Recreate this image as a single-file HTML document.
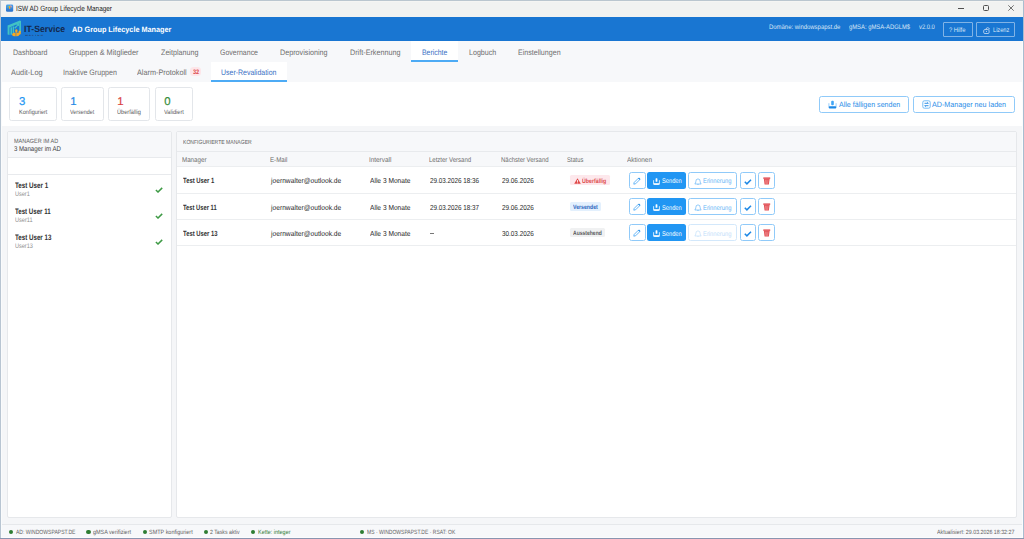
<!DOCTYPE html>
<html><head><meta charset="utf-8"><title>ISW AD Group Lifecycle Manager</title>
<style>
html,body{margin:0;padding:0;}
body{width:1024px;height:539px;overflow:hidden;position:relative;font-family:"Liberation Sans",sans-serif;text-rendering:geometricPrecision;}
.t{position:absolute;white-space:nowrap;line-height:1;transform-origin:0 0;}
.r{position:absolute;}
</style></head><body>
<div class="r" style="left:0px;top:0px;width:1024px;height:539px;background:#F5F6F8;"></div>
<div class="r" style="left:0px;top:0px;width:1024px;height:17px;background:#F1F2F1;"></div>
<div class="r" style="left:0px;top:1px;width:1024px;height:1px;background:#F5F5F3;"></div>
<svg class="r" style="left:5px;top:3px" width="10" height="10" viewBox="5 3 10 10"><defs><linearGradient id="ig" x1="0" y1="0" x2="0" y2="1"><stop offset="0" stop-color="#4BA3F0"/><stop offset="1" stop-color="#2A6FC9"/></linearGradient></defs><rect x="6" y="4.5" width="7.2" height="7.3" rx="1.3" fill="url(#ig)"/><path d="M7.2 7.2 Q8.2 5.6 9.6 5.4 L9.4 6.6 Q8.4 7 7.8 8 Z" fill="#7CC68A"/><path d="M10.2 5.3 Q11.6 5.6 12 7 L11.2 7.4 Q10.8 6.4 10.2 6.2 Z" fill="#F2A0A0"/><path d="M9 6.2 Q9.8 5.8 10.4 6.4 L10.4 8.6 Q9.7 9.2 8.9 8.6 Z" fill="#F5A623"/></svg>
<div class="t" id="t1" style="left:16.40px;top:5.0000px;font-size:7.61px;color:#222222;transform:scaleX(0.8438);">ISW AD Group Lifecycle Manager</div>
<div class="r" style="left:958px;top:8px;width:6px;height:1px;background:#505050;"></div>
<div class="r" style="left:983px;top:5px;width:6px;height:6px;box-sizing:border-box;border:1px solid #505050;border-radius:1.5px;"></div>
<svg class="r" style="left:1008px;top:5px" width="6" height="6" viewBox="0 0 6 6"><path d="M0.3 0.3 L5.7 5.7 M5.7 0.3 L0.3 5.7" stroke="#505050" stroke-width="0.8"/></svg>
<div class="r" style="left:1px;top:17px;width:1022px;height:24px;background:#1976D2;"></div>
<svg class="r" style="left:6px;top:19px" width="18" height="19" viewBox="6 19 18 19"><g fill="#42C2C4"><path d="M7.6 25.4 L19.9 20.4 L21.0 20.9 L21.0 32.0 L19.3 32.6 L19.3 23.2 L9.5 27.4 L9.5 34.9 L7.6 34.4 Z"/><rect x="10.5" y="27.3" width="1.5" height="7.4"/><rect x="12.7" y="26.5" width="1.4" height="7.0"/><path d="M14.3 27.6 L17.4 24.7 L16.2 24.5 L16.8 23.0 L19.0 23.3 L19.1 26.0 L17.9 25.8 L18.0 25.4 L15.4 28.8 Z"/></g><g fill="#F7A823"><rect x="15.3" y="29.3" width="2.1" height="3.4" rx="1"/><rect x="18.6" y="30.8" width="2.2" height="3.6" rx="1"/><path d="M12.1 34.6 Q12.1 32.8 14.2 32.7 L18.6 32.7 Q19.8 32.8 19.6 34.2 Q19.2 36.2 17.0 36.3 L14.0 36.3 Q12.1 36.3 12.1 34.6 Z"/></g><path d="M15.9 32.8 L15.9 36.4" stroke="#1976D2" stroke-width="0.55"/></svg>
<div class="t" id="t2" style="left:23.90px;top:25.0000px;font-size:9.15px;color:#14264A;font-weight:700;transform:scaleX(0.9530);">IT-Service</div>
<div class="t" id="t3" style="left:24.80px;top:35.0000px;font-size:2.0px;color:#2A3F66;font-weight:700;transform:scaleX(1.6134);">W A L T E R</div>
<div class="t" id="t4" style="left:72.00px;top:26.0000px;font-size:7.75px;color:#FFFFFF;font-weight:700;transform:scaleX(0.9382);">AD Group Lifecycle Manager</div>
<div class="t" id="t5" style="left:768.50px;top:25.0000px;font-size:6.63px;color:#D9E6F6;transform:scaleX(0.8976);">Domäne: windowspapst.de</div>
<div class="t" id="t6" style="left:849.00px;top:25.0000px;font-size:6.63px;color:#D9E6F6;transform:scaleX(0.8827);">gMSA: gMSA-ADGLM$</div>
<div class="t" id="t7" style="left:918.90px;top:25.0000px;font-size:6.63px;color:#D9E6F6;transform:scaleX(0.8747);">v2.0.0</div>
<div class="r" style="left:943px;top:22px;width:30px;height:15px;box-sizing:border-box;border:1px solid rgba(255,255,255,0.45);border-radius:1px;"></div>
<div class="t" id="t8" style="left:949.40px;top:28.0000px;font-size:6.63px;color:#DCE8F7;transform:scaleX(0.8732);">? Hilfe</div>
<div class="r" style="left:976px;top:22px;width:39px;height:15px;box-sizing:border-box;border:1px solid rgba(255,255,255,0.45);border-radius:1px;"></div>
<svg class="r" style="left:982.5px;top:26.5px" width="8" height="7" viewBox="0 0 8 7"><rect x="0.7" y="2.6" width="5.4" height="3.9" rx="1.1" fill="none" stroke="#DCE8F7" stroke-width="0.75"/><path d="M3.0 2.6 V1.6 Q4.6 -0.2 6.3 1.4 V2.4" fill="none" stroke="#DCE8F7" stroke-width="0.75"/><circle cx="3.4" cy="4.5" r="0.55" fill="#DCE8F7"/></svg>
<div class="t" id="t9" style="left:992.50px;top:28.0000px;font-size:6.63px;color:#DCE8F7;transform:scaleX(0.8483);">Lizenz</div>
<div class="r" style="left:1px;top:41px;width:1022px;height:41px;background:#F7F8FA;"></div>
<div class="r" style="left:411px;top:41px;width:47px;height:21px;background:#FFFFFF;"></div>
<div class="r" style="left:411px;top:60px;width:47px;height:2px;background:#4DABF5;"></div>
<div class="t" id="t10" style="left:12.50px;top:49.0000px;font-size:7.89px;color:#6E6E6E;transform:scaleX(0.8954);">Dashboard</div>
<div class="t" id="t11" style="left:68.75px;top:49.0000px;font-size:7.89px;color:#6E6E6E;transform:scaleX(0.9339);">Gruppen &amp; Mitglieder</div>
<div class="t" id="t12" style="left:160.50px;top:49.0000px;font-size:7.89px;color:#6E6E6E;transform:scaleX(0.9112);">Zeitplanung</div>
<div class="t" id="t13" style="left:220.00px;top:49.0000px;font-size:7.89px;color:#6E6E6E;transform:scaleX(0.8857);">Governance</div>
<div class="t" id="t14" style="left:279.80px;top:49.0000px;font-size:7.89px;color:#6E6E6E;transform:scaleX(0.9137);">Deprovisioning</div>
<div class="t" id="t15" style="left:349.50px;top:49.0000px;font-size:7.89px;color:#6E6E6E;transform:scaleX(0.9174);">Drift-Erkennung</div>
<div class="t" id="t16" style="left:422.20px;top:49.0000px;font-size:7.89px;color:#3A70C4;transform:scaleX(0.8757);">Berichte</div>
<div class="t" id="t17" style="left:469.30px;top:49.0000px;font-size:7.89px;color:#6E6E6E;transform:scaleX(0.9034);">Logbuch</div>
<div class="t" id="t18" style="left:518.30px;top:49.0000px;font-size:7.89px;color:#6E6E6E;transform:scaleX(0.9007);">Einstellungen</div>
<div class="r" style="left:211px;top:62px;width:76px;height:20px;background:#FFFFFF;"></div>
<div class="r" style="left:211px;top:80px;width:76px;height:2px;background:#4DABF5;"></div>
<div class="t" id="t19" style="left:11.40px;top:69.0000px;font-size:7.89px;color:#6E6E6E;transform:scaleX(0.9372);">Audit-Log</div>
<div class="t" id="t20" style="left:63.30px;top:69.0000px;font-size:7.89px;color:#6E6E6E;transform:scaleX(0.8986);">Inaktive Gruppen</div>
<div class="t" id="t21" style="left:136.70px;top:69.0000px;font-size:7.89px;color:#6E6E6E;transform:scaleX(0.9233);">Alarm-Protokoll</div>
<div class="t" id="t22" style="left:221.00px;top:69.0000px;font-size:7.89px;color:#3A70C4;transform:scaleX(0.8851);">User-Revalidation</div>
<div class="r" style="left:190px;top:67px;width:11px;height:9px;background:#FDE6E9;border-radius:3.5px;"></div>
<div class="t" id="t23" style="left:192.50px;top:70.0000px;font-size:6.49px;color:#DC4A4A;font-weight:700;transform:scaleX(0.8589);">32</div>
<div class="r" style="left:1px;top:82px;width:1022px;height:44px;background:#FFFFFF;"></div>
<div class="r" style="left:9px;top:87px;width:48px;height:34px;background:#FFFFFF;box-sizing:border-box;border:1px solid #E3E6EA;border-radius:2.5px;"></div>
<div class="t" id="t24" style="left:19.00px;top:97.0000px;font-size:11.38px;color:#2196F3;-webkit-text-stroke:0.2px #2196F3;">3</div>
<div class="t" id="t25" style="left:19.00px;top:110.0000px;font-size:6.22px;color:#5C5C5C;transform:scaleX(0.8927);">Konfiguriert</div>
<div class="r" style="left:61px;top:87px;width:43px;height:34px;background:#FFFFFF;box-sizing:border-box;border:1px solid #E3E6EA;border-radius:2.5px;"></div>
<div class="t" id="t26" style="left:70.30px;top:97.0000px;font-size:11.38px;color:#1E88E5;-webkit-text-stroke:0.2px #1E88E5;">1</div>
<div class="t" id="t27" style="left:70.30px;top:110.0000px;font-size:6.22px;color:#5C5C5C;transform:scaleX(0.8674);">Versendet</div>
<div class="r" style="left:108px;top:87px;width:42px;height:34px;background:#FFFFFF;box-sizing:border-box;border:1px solid #E3E6EA;border-radius:2.5px;"></div>
<div class="t" id="t28" style="left:117.20px;top:97.0000px;font-size:11.38px;color:#D9433F;-webkit-text-stroke:0.2px #D9433F;">1</div>
<div class="t" id="t29" style="left:117.20px;top:110.0000px;font-size:6.22px;color:#5C5C5C;transform:scaleX(0.9056);">Überfällig</div>
<div class="r" style="left:155px;top:87px;width:38px;height:34px;background:#FFFFFF;box-sizing:border-box;border:1px solid #E3E6EA;border-radius:2.5px;"></div>
<div class="t" id="t30" style="left:164.20px;top:97.0000px;font-size:11.38px;color:#388E3C;-webkit-text-stroke:0.2px #388E3C;">0</div>
<div class="t" id="t31" style="left:164.20px;top:110.0000px;font-size:6.22px;color:#5C5C5C;transform:scaleX(0.8994);">Validiert</div>
<div class="r" style="left:819px;top:96px;width:90px;height:17px;background:#FFFFFF;box-sizing:border-box;border:1px solid #90CAF9;border-radius:2.5px;"></div>
<svg class="r" style="left:828px;top:100px" width="9" height="9" viewBox="0 0 9 9"><path d="M0.9 3.2 V7.4 Q0.9 8.3 1.8 8.3 H7.2 Q8.1 8.3 8.1 7.4 V3.2" fill="none" stroke="#90CAF9" stroke-width="0.9"/><rect x="0.9" y="6.2" width="7.2" height="2.1" rx="0.6" fill="#1E88E5"/><rect x="3.2" y="0.8" width="2.6" height="4.4" rx="0.9" fill="#42A5F5"/></svg>
<div class="t" id="t32" style="left:839.20px;top:101.0000px;font-size:7.61px;color:#2C8EE8;transform:scaleX(0.9288);">Alle fälligen senden</div>
<div class="r" style="left:913px;top:96px;width:102px;height:17px;background:#FFFFFF;box-sizing:border-box;border:1px solid #90CAF9;border-radius:2.5px;"></div>
<svg class="r" style="left:921.5px;top:100px" width="9" height="9" viewBox="0 0 9 9"><rect x="0.8" y="0.8" width="7.4" height="7.4" rx="1.5" fill="none" stroke="#64B5F6" stroke-width="0.9"/><path d="M2.5 3.3 H6.3 M5.3 2.4 L6.3 3.3" fill="none" stroke="#1E88E5" stroke-width="0.9"/><path d="M6.5 5.7 H2.7 M3.7 6.6 L2.7 5.7" fill="none" stroke="#1E88E5" stroke-width="0.9"/></svg>
<div class="t" id="t33" style="left:932.30px;top:101.0000px;font-size:7.61px;color:#2C8EE8;transform:scaleX(0.9417);">AD-Manager neu laden</div>
<div class="r" style="left:7px;top:131px;width:165px;height:387px;background:#FFFFFF;box-sizing:border-box;border:1px solid #E6E8EB;border-radius:2px;"></div>
<div class="r" style="left:8px;top:132px;width:163px;height:25px;background:#F7F8FA;"></div>
<div class="r" style="left:8px;top:157px;width:163px;height:1px;background:#E8EAED;"></div>
<div class="r" style="left:8px;top:174px;width:163px;height:1px;background:#E8EAED;"></div>
<div class="t" id="t34" style="left:14.10px;top:139.0000px;font-size:6.08px;color:#5E5E5E;transform:scaleX(0.9023);">MANAGER IM AD</div>
<div class="t" id="t35" style="left:14.10px;top:146.0000px;font-size:7.05px;color:#3A3A3A;transform:scaleX(0.8613);">3 Manager im AD</div>
<div class="t" id="t36" style="left:15.00px;top:182.0000px;font-size:7.89px;color:#333333;font-weight:700;transform:scaleX(0.7928);">Test User 1</div>
<div class="t" id="t37" style="left:15.20px;top:192.0000px;font-size:6.63px;color:#8C8C8C;transform:scaleX(0.8367);">User1</div>
<svg class="r" style="left:154.5px;top:187.2px" width="8" height="6" viewBox="0 0 8 6"><path d="M0.9 3.0 L3.0 5.0 L7.2 0.9" fill="none" stroke="#3E9A45" stroke-width="1.5"/></svg>
<div class="t" id="t38" style="left:15.00px;top:208.0000px;font-size:7.89px;color:#333333;font-weight:700;transform:scaleX(0.7790);">Test User 11</div>
<div class="t" id="t39" style="left:15.20px;top:218.0000px;font-size:6.63px;color:#8C8C8C;transform:scaleX(0.8383);">User11</div>
<svg class="r" style="left:154.5px;top:213.2px" width="8" height="6" viewBox="0 0 8 6"><path d="M0.9 3.0 L3.0 5.0 L7.2 0.9" fill="none" stroke="#3E9A45" stroke-width="1.5"/></svg>
<div class="t" id="t40" style="left:15.00px;top:234.0000px;font-size:7.89px;color:#333333;font-weight:700;transform:scaleX(0.7868);">Test User 13</div>
<div class="t" id="t41" style="left:15.20px;top:244.0000px;font-size:6.63px;color:#8C8C8C;transform:scaleX(0.8380);">User13</div>
<svg class="r" style="left:154.5px;top:239.2px" width="8" height="6" viewBox="0 0 8 6"><path d="M0.9 3.0 L3.0 5.0 L7.2 0.9" fill="none" stroke="#3E9A45" stroke-width="1.5"/></svg>
<div class="r" style="left:176px;top:131px;width:841px;height:387px;background:#FFFFFF;box-sizing:border-box;border:1px solid #E6E8EB;border-radius:2px;"></div>
<div class="r" style="left:177px;top:132px;width:839px;height:19px;background:#F7F8FA;"></div>
<div class="r" style="left:177px;top:151px;width:839px;height:1px;background:#E8EAED;"></div>
<div class="r" style="left:177px;top:152px;width:839px;height:14px;background:#F7F8FA;"></div>
<div class="r" style="left:177px;top:166px;width:839px;height:1px;background:#ECEEF0;"></div>
<div class="t" id="t42" style="left:183.10px;top:141.0000px;font-size:5.94px;color:#5E5E5E;transform:scaleX(0.8546);">KONFIGURIERTE MANAGER</div>
<div class="t" id="t43" style="left:182.30px;top:158.0000px;font-size:6.91px;color:#6C6C6C;transform:scaleX(0.8986);">Manager</div>
<div class="t" id="t44" style="left:269.85px;top:158.0000px;font-size:6.91px;color:#6C6C6C;transform:scaleX(0.8939);">E-Mail</div>
<div class="t" id="t45" style="left:368.75px;top:158.0000px;font-size:6.91px;color:#6C6C6C;transform:scaleX(0.9220);">Intervall</div>
<div class="t" id="t46" style="left:429.30px;top:158.0000px;font-size:6.91px;color:#6C6C6C;transform:scaleX(0.8703);">Letzter Versand</div>
<div class="t" id="t47" style="left:500.70px;top:158.0000px;font-size:6.91px;color:#6C6C6C;transform:scaleX(0.8669);">Nächster Versand</div>
<div class="t" id="t48" style="left:566.60px;top:158.0000px;font-size:6.91px;color:#6C6C6C;transform:scaleX(0.8319);">Status</div>
<div class="t" id="t49" style="left:626.80px;top:158.0000px;font-size:6.91px;color:#6C6C6C;transform:scaleX(0.9297);">Aktionen</div>
<div class="t" id="t50" style="left:182.50px;top:177.0000px;font-size:7.47px;color:#333333;font-weight:700;transform:scaleX(0.7880);">Test User 1</div>
<div class="t" id="t51" style="left:270.70px;top:177.0000px;font-size:7.19px;color:#2A2A2A;transform:scaleX(0.9296);">joernwalter@outlook.de</div>
<div class="t" id="t52" style="left:370.10px;top:177.0000px;font-size:7.19px;color:#2A2A2A;transform:scaleX(0.9214);">Alle 3 Monate</div>
<div class="t" id="t53" style="left:430.00px;top:177.0000px;font-size:7.19px;color:#2A2A2A;transform:scaleX(0.8773);">29.03.2026 18:36</div>
<div class="t" id="t54" style="left:501.50px;top:177.0000px;font-size:7.19px;color:#2A2A2A;transform:scaleX(0.8837);">29.06.2026</div>
<div class="r" style="left:177px;top:193px;width:839px;height:1px;background:#ECEEF0;"></div>
<div class="r" style="left:570px;top:175px;width:40px;height:10px;background:#FDE8EC;border-radius:1.5px;"></div>
<svg class="r" style="left:573.5px;top:177.6px" width="7" height="6" viewBox="0 0 7 6"><path d="M3.5 0.2 L6.8 5.8 H0.2 Z" fill="#E04848"/><rect x="3.1" y="2" width="0.8" height="2" fill="#fff"/><rect x="3.1" y="4.5" width="0.8" height="0.8" fill="#fff"/></svg>
<div class="t" id="t55" style="left:582.00px;top:179.0000px;font-size:6.22px;color:#DD4B4B;font-weight:700;transform:scaleX(0.8471);">Überfällig</div>
<div class="r" style="left:629px;top:172px;width:17px;height:17px;background:#FFFFFF;box-sizing:border-box;border:1px solid #90CAF9;border-radius:2.5px;"></div>
<svg class="r" style="left:633px;top:177px" width="8" height="8" viewBox="0 0 8 8"><path d="M0.8 7.2 L1.2 5.4 L5.4 1.2 L6.8 2.6 L2.6 6.8 Z" fill="none" stroke="#42A5F5" stroke-width="0.8"/><path d="M5.2 1.4 L6.0 0.6 L7.4 2.0 L6.6 2.8 Z" fill="#1E88E5"/></svg>
<div class="r" style="left:647px;top:172px;width:39px;height:17px;background:#2196F3;border-radius:2.5px;"></div>
<svg class="r" style="left:652.5px;top:177.5px" width="7" height="7" viewBox="0 0 7 7"><path d="M0.6 2.2 V5.8 Q0.6 6.5 1.3 6.5 H5.7 Q6.4 6.5 6.4 5.8 V2.2" fill="none" stroke="#fff" stroke-width="0.8"/><rect x="0.6" y="5.2" width="5.8" height="1.4" fill="#fff"/><rect x="2.6" y="0.2" width="1.8" height="3.6" rx="0.5" fill="#fff"/></svg>
<div class="t" id="t56" style="left:662.10px;top:179.0000px;font-size:6.77px;color:#FFFFFF;transform:scaleX(0.8445);">Senden</div>
<div class="r" style="left:688px;top:172px;width:49px;height:17px;background:#FFFFFF;box-sizing:border-box;border:1px solid #90CAF9;border-radius:2.5px;"></div>
<svg class="r" style="left:693.5px;top:177.5px" width="8" height="7" viewBox="0 0 8 7"><path d="M0.8 6 Q1.8 5.2 1.8 3.6 Q1.8 0.9 4 0.9 Q6.2 0.9 6.2 3.6 Q6.2 5.2 7.2 6 Z" fill="none" stroke="#64B5F6" stroke-width="0.7"/><path d="M3.2 6.6 H4.8" stroke="#64B5F6" stroke-width="0.6"/></svg>
<div class="t" id="t57" style="left:703.40px;top:179.0000px;font-size:6.77px;color:#64B5F6;transform:scaleX(0.8608);">Erinnerung</div>
<div class="r" style="left:740px;top:172px;width:16px;height:17px;background:#FFFFFF;box-sizing:border-box;border:1px solid #90CAF9;border-radius:2.5px;"></div>
<svg class="r" style="left:744px;top:179px" width="8" height="6" viewBox="0 0 8 6"><path d="M0.8 2.8 L2.9 4.9 L7.0 0.8" fill="none" stroke="#1E88E5" stroke-width="1.5"/></svg>
<div class="r" style="left:758px;top:172px;width:17px;height:17px;background:#FFFFFF;box-sizing:border-box;border:1px solid #90CAF9;border-radius:2.5px;"></div>
<svg class="r" style="left:762.5px;top:177px" width="8" height="8" viewBox="0 0 8 8"><path d="M0.3 0.4 H7.2 V1.9 H0.3 Z" fill="#E25056"/><path d="M0.9 1.9 H6.6 L5.9 7.6 H1.6 Z" fill="#E25056"/><path d="M2.4 2.6 L2.9 6.9 M3.75 2.6 V6.9 M5.1 2.6 L4.6 6.9" stroke="#F6B0B0" stroke-width="0.45"/></svg>
<div class="t" id="t58" style="left:182.50px;top:204.0000px;font-size:7.47px;color:#333333;font-weight:700;transform:scaleX(0.7730);">Test User 11</div>
<div class="t" id="t59" style="left:270.70px;top:204.0000px;font-size:7.19px;color:#2A2A2A;transform:scaleX(0.9296);">joernwalter@outlook.de</div>
<div class="t" id="t60" style="left:370.10px;top:204.0000px;font-size:7.19px;color:#2A2A2A;transform:scaleX(0.9214);">Alle 3 Monate</div>
<div class="t" id="t61" style="left:430.00px;top:204.0000px;font-size:7.19px;color:#2A2A2A;transform:scaleX(0.8773);">29.03.2026 18:37</div>
<div class="t" id="t62" style="left:501.50px;top:204.0000px;font-size:7.19px;color:#2A2A2A;transform:scaleX(0.8837);">29.06.2026</div>
<div class="r" style="left:177px;top:219px;width:839px;height:1px;background:#ECEEF0;"></div>
<div class="r" style="left:570px;top:202px;width:31px;height:9px;background:#E3F0FD;border-radius:1.5px;"></div>
<div class="t" id="t63" style="left:573.00px;top:205.0000px;font-size:6.22px;color:#2D68C0;font-weight:700;transform:scaleX(0.8341);">Versendet</div>
<div class="r" style="left:629px;top:198px;width:17px;height:17px;background:#FFFFFF;box-sizing:border-box;border:1px solid #90CAF9;border-radius:2.5px;"></div>
<svg class="r" style="left:633px;top:203px" width="8" height="8" viewBox="0 0 8 8"><path d="M0.8 7.2 L1.2 5.4 L5.4 1.2 L6.8 2.6 L2.6 6.8 Z" fill="none" stroke="#42A5F5" stroke-width="0.8"/><path d="M5.2 1.4 L6.0 0.6 L7.4 2.0 L6.6 2.8 Z" fill="#1E88E5"/></svg>
<div class="r" style="left:647px;top:198px;width:39px;height:17px;background:#2196F3;border-radius:2.5px;"></div>
<svg class="r" style="left:652.5px;top:203.5px" width="7" height="7" viewBox="0 0 7 7"><path d="M0.6 2.2 V5.8 Q0.6 6.5 1.3 6.5 H5.7 Q6.4 6.5 6.4 5.8 V2.2" fill="none" stroke="#fff" stroke-width="0.8"/><rect x="0.6" y="5.2" width="5.8" height="1.4" fill="#fff"/><rect x="2.6" y="0.2" width="1.8" height="3.6" rx="0.5" fill="#fff"/></svg>
<div class="t" id="t64" style="left:662.10px;top:206.0000px;font-size:6.77px;color:#FFFFFF;transform:scaleX(0.8445);">Senden</div>
<div class="r" style="left:688px;top:198px;width:49px;height:17px;background:#FFFFFF;box-sizing:border-box;border:1px solid #90CAF9;border-radius:2.5px;"></div>
<svg class="r" style="left:693.5px;top:203.5px" width="8" height="7" viewBox="0 0 8 7"><path d="M0.8 6 Q1.8 5.2 1.8 3.6 Q1.8 0.9 4 0.9 Q6.2 0.9 6.2 3.6 Q6.2 5.2 7.2 6 Z" fill="none" stroke="#64B5F6" stroke-width="0.7"/><path d="M3.2 6.6 H4.8" stroke="#64B5F6" stroke-width="0.6"/></svg>
<div class="t" id="t65" style="left:703.40px;top:206.0000px;font-size:6.77px;color:#64B5F6;transform:scaleX(0.8608);">Erinnerung</div>
<div class="r" style="left:740px;top:198px;width:16px;height:17px;background:#FFFFFF;box-sizing:border-box;border:1px solid #90CAF9;border-radius:2.5px;"></div>
<svg class="r" style="left:744px;top:205px" width="8" height="6" viewBox="0 0 8 6"><path d="M0.8 2.8 L2.9 4.9 L7.0 0.8" fill="none" stroke="#1E88E5" stroke-width="1.5"/></svg>
<div class="r" style="left:758px;top:198px;width:17px;height:17px;background:#FFFFFF;box-sizing:border-box;border:1px solid #90CAF9;border-radius:2.5px;"></div>
<svg class="r" style="left:762.5px;top:203px" width="8" height="8" viewBox="0 0 8 8"><path d="M0.3 0.4 H7.2 V1.9 H0.3 Z" fill="#E25056"/><path d="M0.9 1.9 H6.6 L5.9 7.6 H1.6 Z" fill="#E25056"/><path d="M2.4 2.6 L2.9 6.9 M3.75 2.6 V6.9 M5.1 2.6 L4.6 6.9" stroke="#F6B0B0" stroke-width="0.45"/></svg>
<div class="t" id="t66" style="left:182.50px;top:230.0000px;font-size:7.47px;color:#333333;font-weight:700;transform:scaleX(0.7863);">Test User 13</div>
<div class="t" id="t67" style="left:270.70px;top:230.0000px;font-size:7.19px;color:#2A2A2A;transform:scaleX(0.9296);">joernwalter@outlook.de</div>
<div class="t" id="t68" style="left:370.10px;top:230.0000px;font-size:7.19px;color:#2A2A2A;transform:scaleX(0.9214);">Alle 3 Monate</div>
<div class="r" style="left:430px;top:233px;width:4px;height:1px;background:#777;"></div>
<div class="t" id="t69" style="left:501.50px;top:230.0000px;font-size:7.19px;color:#2A2A2A;transform:scaleX(0.8837);">30.03.2026</div>
<div class="r" style="left:177px;top:245px;width:839px;height:1px;background:#ECEEF0;"></div>
<div class="r" style="left:570px;top:228px;width:35px;height:9px;background:#F0F1F2;border-radius:1.5px;"></div>
<div class="t" id="t70" style="left:573.00px;top:231.0000px;font-size:6.22px;color:#5A5A5A;font-weight:700;transform:scaleX(0.8091);">Ausstehend</div>
<div class="r" style="left:629px;top:224px;width:17px;height:17px;background:#FFFFFF;box-sizing:border-box;border:1px solid #90CAF9;border-radius:2.5px;"></div>
<svg class="r" style="left:633px;top:229px" width="8" height="8" viewBox="0 0 8 8"><path d="M0.8 7.2 L1.2 5.4 L5.4 1.2 L6.8 2.6 L2.6 6.8 Z" fill="none" stroke="#42A5F5" stroke-width="0.8"/><path d="M5.2 1.4 L6.0 0.6 L7.4 2.0 L6.6 2.8 Z" fill="#1E88E5"/></svg>
<div class="r" style="left:647px;top:224px;width:39px;height:17px;background:#2196F3;border-radius:2.5px;"></div>
<svg class="r" style="left:652.5px;top:229.5px" width="7" height="7" viewBox="0 0 7 7"><path d="M0.6 2.2 V5.8 Q0.6 6.5 1.3 6.5 H5.7 Q6.4 6.5 6.4 5.8 V2.2" fill="none" stroke="#fff" stroke-width="0.8"/><rect x="0.6" y="5.2" width="5.8" height="1.4" fill="#fff"/><rect x="2.6" y="0.2" width="1.8" height="3.6" rx="0.5" fill="#fff"/></svg>
<div class="t" id="t71" style="left:662.10px;top:232.0000px;font-size:6.77px;color:#FFFFFF;transform:scaleX(0.8445);">Senden</div>
<div class="r" style="left:688px;top:224px;width:49px;height:17px;background:#FFFFFF;box-sizing:border-box;border:1px solid #D3E8FB;border-radius:2.5px;"></div>
<svg class="r" style="left:693.5px;top:229.5px" width="8" height="7" viewBox="0 0 8 7"><path d="M0.8 6 Q1.8 5.2 1.8 3.6 Q1.8 0.9 4 0.9 Q6.2 0.9 6.2 3.6 Q6.2 5.2 7.2 6 Z" fill="none" stroke="#C2E0FA" stroke-width="0.7"/><path d="M3.2 6.6 H4.8" stroke="#C2E0FA" stroke-width="0.6"/></svg>
<div class="t" id="t72" style="left:703.40px;top:232.0000px;font-size:6.77px;color:#C2E0FA;transform:scaleX(0.8608);">Erinnerung</div>
<div class="r" style="left:740px;top:224px;width:16px;height:17px;background:#FFFFFF;box-sizing:border-box;border:1px solid #90CAF9;border-radius:2.5px;"></div>
<svg class="r" style="left:744px;top:231px" width="8" height="6" viewBox="0 0 8 6"><path d="M0.8 2.8 L2.9 4.9 L7.0 0.8" fill="none" stroke="#1E88E5" stroke-width="1.5"/></svg>
<div class="r" style="left:758px;top:224px;width:17px;height:17px;background:#FFFFFF;box-sizing:border-box;border:1px solid #90CAF9;border-radius:2.5px;"></div>
<svg class="r" style="left:762.5px;top:229px" width="8" height="8" viewBox="0 0 8 8"><path d="M0.3 0.4 H7.2 V1.9 H0.3 Z" fill="#E25056"/><path d="M0.9 1.9 H6.6 L5.9 7.6 H1.6 Z" fill="#E25056"/><path d="M2.4 2.6 L2.9 6.9 M3.75 2.6 V6.9 M5.1 2.6 L4.6 6.9" stroke="#F6B0B0" stroke-width="0.45"/></svg>
<div class="r" style="left:1px;top:524px;width:1022px;height:14px;background:#F7F8FA;"></div>
<div class="r" style="left:1px;top:524px;width:1022px;height:1px;background:#E6E8EB;"></div>
<div class="r" style="left:9.0px;top:529.5px;width:4.4px;height:4.4px;border-radius:50%;background:#2E7D32"></div>
<div class="t" id="t73" style="left:15.85px;top:530.0000px;font-size:6.08px;color:#5F5F5F;transform:scaleX(0.8323);">AD: WINDOWSPAPST.DE</div>
<div class="r" style="left:86.39999999999999px;top:529.5px;width:4.4px;height:4.4px;border-radius:50%;background:#2E7D32"></div>
<div class="t" id="t74" style="left:93.30px;top:530.0000px;font-size:6.08px;color:#5F5F5F;transform:scaleX(0.8997);">gMSA verifiziert</div>
<div class="r" style="left:142.70000000000002px;top:529.5px;width:4.4px;height:4.4px;border-radius:50%;background:#2E7D32"></div>
<div class="t" id="t75" style="left:149.40px;top:530.0000px;font-size:6.08px;color:#5F5F5F;transform:scaleX(0.9005);">SMTP konfiguriert</div>
<div class="r" style="left:203.8px;top:529.5px;width:4.4px;height:4.4px;border-radius:50%;background:#2E7D32"></div>
<div class="t" id="t76" style="left:210.30px;top:530.0000px;font-size:6.08px;color:#5F5F5F;transform:scaleX(0.8562);">2 Tasks aktiv</div>
<div class="r" style="left:250.70000000000002px;top:529.5px;width:4.4px;height:4.4px;border-radius:50%;background:#2E7D32"></div>
<div class="t" id="t77" style="left:257.50px;top:530.0000px;font-size:6.08px;color:#2F7D34;transform:scaleX(0.8989);">Kette: integer</div>
<div class="r" style="left:360.1px;top:529.5px;width:4.4px;height:4.4px;border-radius:50%;background:#2E7D32"></div>
<div class="t" id="t78" style="left:367.00px;top:530.0000px;font-size:6.08px;color:#5F5F5F;transform:scaleX(0.8266);">MS · WINDOWSPAPST.DE · RSAT: OK</div>
<div class="t" id="t79" style="left:937.30px;top:530.0000px;font-size:6.08px;color:#5F5F5F;transform:scaleX(0.8709);">Aktualisiert: 29.03.2026 18:32:27</div>
<div class="r" style="left:1px;top:41px;width:1px;height:497px;background:#FAFBFC;"></div>
<div class="r" style="left:1022px;top:41px;width:1px;height:497px;background:#FBFCFD;"></div>
<div class="r" style="left:1px;top:537px;width:1022px;height:1px;background:#FCFCFD;"></div>
<div class="r" style="left:0px;top:0px;width:1px;height:539px;background:#B8C5D2;"></div>
<div class="r" style="left:1023px;top:0px;width:1px;height:539px;background:#A8BDD0;"></div>
<div class="r" style="left:0px;top:0px;width:1024px;height:1px;background:#BAC6CF;"></div>
<div class="r" style="left:0px;top:538px;width:1024px;height:1px;background:#8A95B0;"></div>
</body></html>
